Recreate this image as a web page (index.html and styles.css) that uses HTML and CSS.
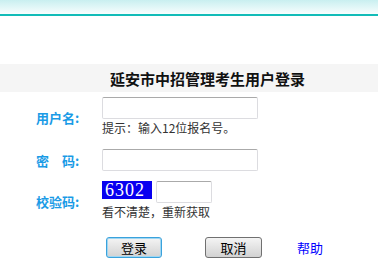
FILE: index.html
```html
<!DOCTYPE html>
<html lang="zh">
<head>
    <meta charset="UTF-8">
    <title>延安市中招管理考生用户登录</title>
    <link rel="stylesheet" href="styles.css">
</head>
<body>
    <div class="top-bar"></div>

    <div class="title-band">
        <h1>延安市中招管理考生用户登录</h1>
    </div>

    <div class="login-form">
        <div class="form-row row-user">
            <label class="form-label">用户名:</label>
            <div class="form-field">
                <input type="text" class="text-input">
                <p class="tip">提示：输入12位报名号。</p>
            </div>
        </div>

        <div class="form-row row-pass">
            <label class="form-label">密<span class="gap"></span>码:</label>
            <div class="form-field">
                <input type="password" class="text-input">
            </div>
        </div>

        <div class="form-row row-code">
            <label class="form-label">校验码:</label>
            <div class="form-field">
                <div class="code-line">
                    <span class="code-img">6302</span>
                    <input type="text" class="code-input">
                </div>
                <p class="tip">看不清楚，重新获取</p>
            </div>
        </div>

        <div class="btn-row">
            <button class="btn btn-login">登录</button>
            <button class="btn btn-cancel">取消</button>
            <a href="#" class="help-link">帮助</a>
        </div>
    </div>
</body>
</html>
```

FILE: styles.css
```css
* {
    margin: 0;
    padding: 0;
    box-sizing: border-box;
}

body {
    font-family: "Noto Sans CJK SC", "Liberation Sans", sans-serif;
    font-size: 12px;
    background-color: #fff;
    color: #333;
}

.top-bar {
    height: 16px;
    background: linear-gradient(#c9eff0, #f8fefe);
    border-bottom: 2px solid #12bcb8;
}

.title-band {
    margin-top: 48px;
    height: 28px;
    background-color: #f5f5f5;
    display: flex;
    align-items: center;
    padding-left: 110px;
}

.title-band h1 {
    font-size: 15px;
    font-weight: bold;
    color: #111;
    line-height: 1;
}

.login-form {
    padding-top: 5px;
}

.form-row {
    display: flex;
    align-items: center;
}

.row-pass {
    margin-top: 12px;
}

.row-code {
    margin-top: 10px;
}

.form-label {
    width: 102px;
    padding-left: 36px;
    font-size: 13px;
    font-weight: bold;
    color: #1a9be6;
    white-space: pre;
}

.form-label .gap {
    display: inline-block;
    width: 13px;
}

.text-input {
    display: block;
    width: 156px;
    height: 22px;
    border: 1px solid #dcdce0;
    border-top-color: #aaa;
    border-radius: 2px;
}

.tip {
    font-size: 12px;
    line-height: 18px;
    color: #333;
}

.code-line {
    display: flex;
    align-items: flex-start;
    gap: 4px;
}

.code-img {
    display: block;
    width: 50px;
    height: 18px;
    background-color: #0800f0;
    color: #fff;
    font-family: "Liberation Serif", serif;
    font-size: 18px;
    line-height: 18px;
    letter-spacing: 1px;
    padding-left: 3px;
    overflow: hidden;
}

.code-input {
    display: block;
    width: 56px;
    height: 22px;
    border: 1px solid #dcdce0;
    border-top-color: #aaa;
    border-radius: 2px;
}

.btn-row {
    display: flex;
    align-items: center;
    margin-top: 16px;
    padding-left: 106px;
}

.btn {
    width: 56px;
    height: 21px;
    font-family: "Noto Sans CJK SC", sans-serif;
    font-size: 13px;
    line-height: 17px;
    color: #000;
    background: linear-gradient(#f4f4f4, #d2d2d2);
    border-radius: 3px;
    cursor: pointer;
}

.btn-login {
    border: 1px solid #3aa2dc;
    box-shadow: inset 0 0 0 1px #9fd6f2;
}

.btn-cancel {
    margin-left: 43px;
    width: 57px;
    border: 1px solid #707070;
}

.help-link {
    margin-left: 35px;
    font-size: 13px;
    color: #0000ff;
    text-decoration: none;
}
```
